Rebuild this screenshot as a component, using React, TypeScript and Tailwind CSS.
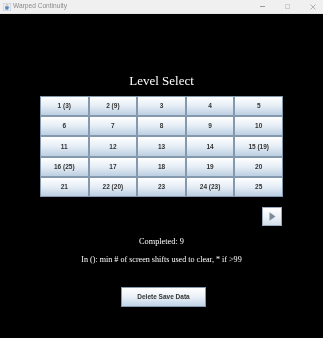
import React from "react";

const labels = [
  "1 (3)", "2 (9)", "3", "4", "5",
  "6", "7", "8", "9", "10",
  "11", "12", "13", "14", "15 (19)",
  "16 (25)", "17", "18", "19", "20",
  "21", "22 (20)", "23", "24 (23)", "25",
];

export default function App() {
  return (
    <div className="w-[323px] h-[338px] bg-black flex flex-col overflow-hidden antialiased will-change-transform">
      {/* title bar */}
      <div className="h-[14px] bg-[#f0f0f0] border-b border-[#e4e4e4] flex items-center relative shrink-0">
        <svg className="ml-[3px]" width="8" height="8" viewBox="0 0 8 8">
          <rect x="0" y="0" width="8" height="8" fill="#e8eef6" stroke="#9fb3c8" strokeWidth="0.6" />
          <path d="M2.2 3.2 h3.4 v2.4 a1.7 1.2 0 0 1 -3.4 0 z" fill="#5a86b8" />
          <path d="M5.6 3.8 q1.2 0.3 0 1.2" fill="none" stroke="#5a86b8" strokeWidth="0.5" />
          <path d="M3.4 1 q0.6 0.8 0 1.6 M4.6 1 q0.6 0.8 0 1.6" fill="none" stroke="#e07a2a" strokeWidth="0.5" />
        </svg>
        <span
          className="ml-[2px] text-[6.6px] leading-none text-[#8a8a8a]"
          style={{ fontFamily: '"Liberation Sans", Arial, sans-serif' }}
        >
          Warped Continuity
        </span>
        <div className="ml-auto flex items-center h-full">
          <div className="w-[25px] flex justify-center">
            <div className="w-[5px] h-[0.6px] bg-[#9a9a9a]" />
          </div>
          <div className="w-[25px] flex justify-center">
            <div className="w-[5px] h-[5px] border-[0.6px] border-[#cfcfcf]" />
          </div>
          <div className="w-[25px] flex justify-center mr-[-2px]">
            <svg width="6" height="6" viewBox="0 0 6 6">
              <path d="M0.5 0.5 L5.5 5.5 M5.5 0.5 L0.5 5.5" stroke="#8a8a8a" strokeWidth="0.6" />
            </svg>
          </div>
        </div>
      </div>

      {/* heading */}
      <div
        className="mt-[59px] h-[15px] leading-[15px] text-center text-white text-[13px]"
        style={{ fontFamily: '"Liberation Serif", serif' }}
      >
        Level Select
      </div>

      {/* grid */}
      <div className="mt-[8px] mx-auto w-[243px] h-[101px] grid grid-cols-5 grid-rows-5">
        {labels.map((l) => (
          <div
            key={l}
            className="border-[0.8px] border-[#8599ae] bg-gradient-to-b from-[#ffffff] via-[#e5edf5] to-[#bccfe2] flex items-center justify-center text-[6.5px] font-bold text-[#333333]"
            style={{ fontFamily: '"Liberation Sans", Arial, sans-serif' }}
          >
            {l}
          </div>
        ))}
      </div>

      {/* arrow */}
      <div className="mx-auto w-[243px] flex justify-end mt-[10px]">
        <div className="w-[20px] h-[19px] mr-[1px] border-[0.8px] border-[#9aabbd] bg-gradient-to-b from-[#ffffff] via-[#eef3f8] to-[#d3dfeb] flex items-center justify-center">
          <svg width="7" height="9" viewBox="0 0 7 9">
            <path d="M0.5 0.3 L6.5 4.5 L0.5 8.7 Z" fill="#7d8c9b" />
          </svg>
        </div>
      </div>

      {/* texts */}
      <div
        className="mt-[11px] h-[10px] leading-[10px] text-center text-white text-[8.3px]"
        style={{ fontFamily: '"Liberation Serif", serif' }}
      >
        Completed: 9
      </div>
      <div
        className="mt-[8px] h-[10px] leading-[10px] text-center text-white text-[8.1px]"
        style={{ fontFamily: '"Liberation Serif", serif' }}
      >
        In (): min # of screen shifts used to clear, * if &gt;99
      </div>

      {/* delete */}
      <div className="mt-[22px] flex justify-center pl-[4px]">
        <div
          className="w-[85px] h-[20px] border-[0.8px] border-[#8599ae] bg-gradient-to-b from-[#ffffff] via-[#e9f0f7] to-[#c2d4e6] flex items-center justify-center text-[6.5px] font-bold text-[#333333]"
          style={{ fontFamily: '"Liberation Sans", Arial, sans-serif' }}
        >
          Delete Save Data
        </div>
      </div>
    </div>
  );
}
